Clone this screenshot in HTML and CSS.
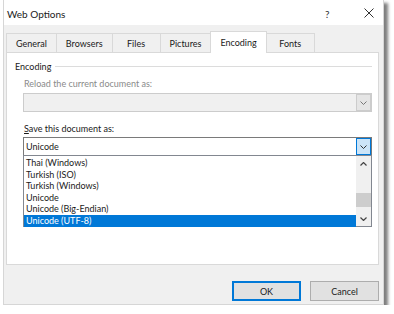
FILE: index.html
```html
<!DOCTYPE html>
<html>
<head>
<meta charset="utf-8">
<link rel="stylesheet" href="styles.css">
</head>
<body>
<div class="dialog">
  <div class="titlebar">
    <span class="title">Web Options</span>
    <span class="help">?</span>
    <span class="close"><svg width="10" height="10" viewBox="0 0 10 10"><path d="M0.5 0.5 L9.5 9.5 M9.5 0.5 L0.5 9.5" stroke="#333" stroke-width="1" fill="none"/></svg></span>
  </div>
  <div class="content">
    <div class="tabs">
      <div class="tab">General</div>
      <div class="tab">Browsers</div>
      <div class="tab">Files</div>
      <div class="tab">Pictures</div>
      <div class="tab active">Encoding</div>
      <div class="tab last">Fonts</div>
    </div>
    <div class="panel">
      <div class="group-head"><span class="group-label">Encoding</span><span class="rule"></span></div>
      <div class="fields">
        <div class="label disabled">Reload the current document as:</div>
        <div class="combo combo-disabled">
          <div class="combo-text"></div>
          <div class="drop drop-disabled"><svg width="7" height="4" viewBox="0 0 7 4"><path d="M0.5 0.5 L3.5 3.5 L6.5 0.5" stroke="#777" stroke-width="1" fill="none"/></svg></div>
        </div>
        <div class="label label-save"><span class="u">S</span>ave this document as:</div>
        <div class="combo">
          <div class="combo-text">Unicode</div>
          <div class="drop drop-active"><svg width="7" height="4" viewBox="0 0 7 4"><path d="M0.5 0.5 L3.5 3.5 L6.5 0.5" stroke="#333" stroke-width="1" fill="none"/></svg></div>
        </div>
        <div class="list">
          <div class="items">
            <div class="item">Thai (Windows)</div>
            <div class="item">Turkish (ISO)</div>
            <div class="item">Turkish (Windows)</div>
            <div class="item">Unicode</div>
            <div class="item">Unicode (Big-Endian)</div>
            <div class="item selected">Unicode (UTF-8)</div>
          </div>
          <div class="scrollbar">
            <div class="sb-btn"><svg width="7" height="4" viewBox="0 0 7 4"><path d="M0.5 3.5 L3.5 0.5 L6.5 3.5" stroke="#444" stroke-width="1.2" fill="none"/></svg></div>
            <div class="sb-track"><div class="thumb"></div></div>
            <div class="sb-btn"><svg width="7" height="4" viewBox="0 0 7 4"><path d="M0.5 0.5 L3.5 3.5 L6.5 0.5" stroke="#444" stroke-width="1.2" fill="none"/></svg></div>
          </div>
        </div>
      </div>
    </div>
    <div class="buttons">
      <div class="btn btn-default">OK</div>
      <div class="btn">Cancel</div>
    </div>
  </div>
</div>
</body>
</html>
```

FILE: styles.css
```css
html, body {
  margin: 0;
  padding: 0;
  background: #ffffff;
}
body {
  font-family: Lato, "Noto Sans", sans-serif;
  font-size: 9px;
  color: #1a1a1a;
}
.dialog {
  margin-left: 3px;
  width: 381px;
  height: 305px;
  box-sizing: border-box;
  border: 1px solid #d6d6d6;
  border-top: none;
  background: #f0f0f0;
  box-shadow: 4px 3px 3px rgba(0, 0, 0, 0.5);
  display: flex;
  flex-direction: column;
}
.titlebar {
  height: 25px;
  background: #ffffff;
  display: flex;
  align-items: center;
  padding-left: 3px;
  flex-shrink: 0;
}
.title {
  font-size: 10px;
  color: #1a1a1a;
  flex: 1;
  padding-top: 2px;
}
.help {
  font-size: 10px;
  color: #333;
  width: 10px;
  margin-right: 29px;
  padding-top: 2px;
}
.close {
  width: 10px;
  height: 10px;
  margin-right: 9px;
  display: flex;
}
.content {
  flex: 1;
  padding: 0 4px 0 2px;
  display: flex;
  flex-direction: column;
}
.tabs {
  display: flex;
  align-items: flex-end;
  height: 21px;
  margin-top: 6px;
}
.tab {
  height: 19px;
  box-sizing: border-box;
  min-width: 48px;
  padding: 0 9px;
  display: flex;
  align-items: center;
  justify-content: center;
  border-top: 1px solid #d9d9d9;
  border-left: 1px solid #d9d9d9;
  background: #f0f0f0;
}
.tab.last {
  border-right: 1px solid #d9d9d9;
}
.tab.active {
  height: 22px;
  margin-bottom: -1px;
  background: #ffffff;
  border-right: 1px solid #d9d9d9;
  position: relative;
  z-index: 1;
  padding-bottom: 1px;
}
.tab.active + .tab {
  border-left: none;
}
.panel {
  height: 213px;
  box-sizing: border-box;
  background: #ffffff;
  border: 1px solid #d9d9d9;
  padding: 5px 6px 0 8px;
}
.group-head {
  display: flex;
  align-items: center;
  height: 16px;
}
.group-label {
  color: #1a1a1a;
}
.rule {
  flex: 1;
  height: 1px;
  background: #dcdcdc;
  margin-left: 4px;
}
.fields {
  padding-left: 8px;
}
.label {
  line-height: 14px;
  height: 14px;
  padding-left: 1px;
}
.label.disabled {
  color: #8a8a8a;
  margin-top: 3px;
}
.label-save {
  margin-top: 10px;
}
.u {
  text-decoration: underline;
}
.combo {
  margin-top: 1px;
  height: 19px;
  box-sizing: border-box;
  border: 1px solid #7a7a7a;
  background: #ffffff;
  display: flex;
  align-items: stretch;
}
.combo-disabled {
  margin-top: 2px;
  border-color: #cccccc;
  background: #f0f0f0;
}
.combo-text {
  flex: 1;
  display: flex;
  align-items: center;
  padding-left: 2px;
}
.drop {
  width: 15px;
  display: flex;
  align-items: center;
  justify-content: center;
  box-sizing: border-box;
}
.drop-disabled {
  background: #e5e5e5;
  border: 1px solid #cccccc;
}
.drop-active {
  background: #cce4f7;
  border: 1px solid #0078d7;
}
.list {
  margin-top: -1px;
  height: 72px;
  box-sizing: border-box;
  border: 1px solid #828790;
  background: #ffffff;
  display: flex;
}
.items {
  flex: 1;
  padding-top: 1px;
}
.item {
  height: 11.6px;
  line-height: 11.6px;
  padding-left: 2px;
}
.item.selected {
  background: #0078d7;
  color: #ffffff;
}
.scrollbar {
  width: 15px;
  background: #f0f0f0;
  display: flex;
  flex-direction: column;
}
.sb-btn {
  height: 15px;
  display: flex;
  align-items: center;
  justify-content: center;
}
.sb-track {
  flex: 1;
}
.thumb {
  margin: 22px 0 0 0;
  height: 14px;
  background: #cdcdcd;
}
.buttons {
  display: flex;
  justify-content: flex-end;
  gap: 9px;
  margin-top: 16px;
}
.btn {
  width: 69px;
  height: 20px;
  box-sizing: border-box;
  border: 1px solid #adadad;
  background: #e1e1e1;
  display: flex;
  align-items: center;
  justify-content: center;
  color: #1a1a1a;
}
.btn-default {
  border: 2px solid #0078d7;
}
```
